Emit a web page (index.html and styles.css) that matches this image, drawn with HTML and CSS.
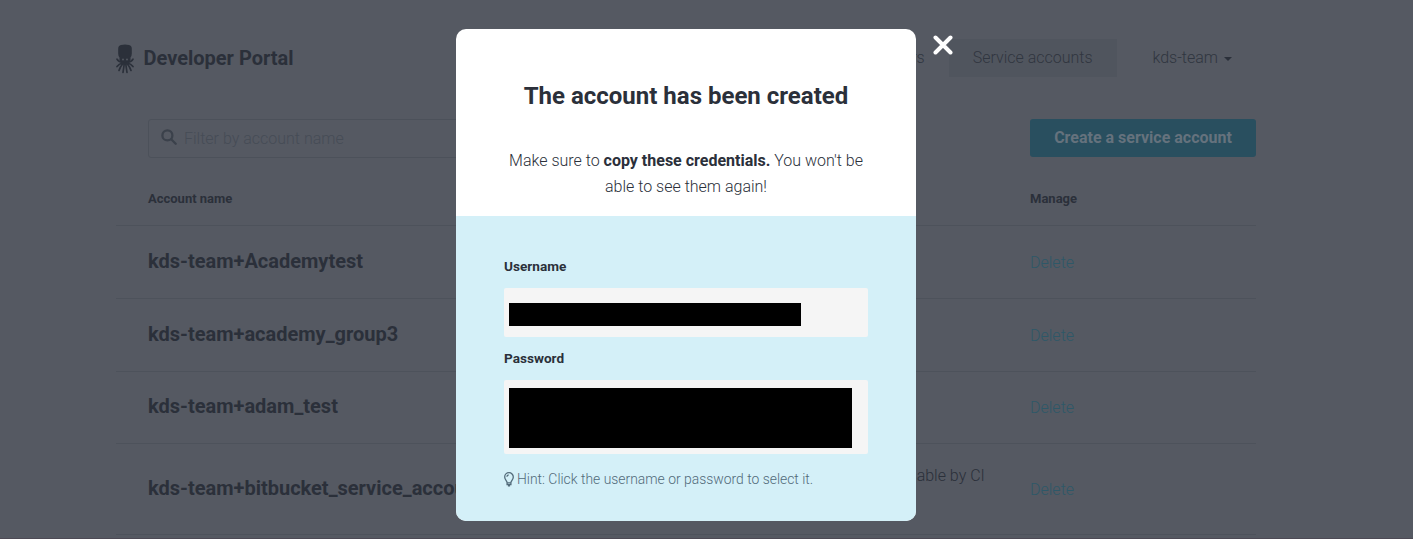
FILE: index.html
```
<!DOCTYPE html>
<html lang="en">
<head>
<meta charset="utf-8">
<title>Developer Portal</title>
<link rel="stylesheet" href="styles.css">
</head>
<body>
<div class="page">
  <header class="header">
    <div class="brand">
      <svg class="logo" viewBox="0 0 18 30">
        <path class="solid" d="M5 1Q9 0 13 1Q15.800 1.600 15.800 4.800V9.500Q15.800 12 14.500 13.500V16.500L12 19.500H6L3.500 16.500V13.500Q2.200 12 2.200 9.500V4.800Q2.200 1.600 5 1Z"/>
        <path class="arms" d="M1 15.200Q2.500 18 6.500 18.600M17 15.200Q15.500 18 11.500 18.600M6.500 19Q3 20 1 22.500M11.500 19Q15 20 17 22.500M7 19.500Q4 23 3 26.500M11 19.500Q14 23 15 26.500M8.300 19.500L7 28.500M9.700 19.500L11 28.500"/>
        <circle class="eye" cx="7" cy="15.500" r=".9"/><circle class="eye" cx="11" cy="15.500" r=".9"/>
      </svg>
      <span class="brand-name">Developer Portal</span>
    </div>
    <nav class="nav">
      <span class="nav-item">Users</span>
      <span class="nav-item active">Service accounts</span>
      <span class="nav-item team">kds-team <i class="caret"></i></span>
    </nav>
  </header>
  <div class="toolbar">
    <div class="search">
      <svg class="search-icon" viewBox="0 0 16 16"><circle cx="6.400" cy="6.400" r="5"/><path d="M10.200 10.200L14.700 14.700"/></svg>
      <span>Filter by account name</span>
    </div>
    <div class="button">Create a service account</div>
  </div>
  <div class="row head"><span>Account name</span><span></span><span>Manage</span></div>
  <div class="row"><span class="name">kds-team+Academytest</span><span></span><span class="delete">Delete</span></div>
  <div class="row"><span class="name">kds-team+academy_group3</span><span></span><span class="delete">Delete</span></div>
  <div class="row short"><span class="name">kds-team+adam_test</span><span></span><span class="delete">Delete</span></div>
  <div class="row tall"><span class="name">kds-team+bitbucket_service_account</span><span class="note">Usable by CI</span><span class="delete">Delete</span></div>
</div>
<section class="modal">
  <div class="modal-head">
    <h1>The account has been created</h1>
    <p>Make sure to <b>copy these credentials.</b> You won't be<br>able to see them again!</p>
  </div>
  <div class="modal-body">
    <div class="label">Username</div>
    <div class="field username"><div class="redacted"></div></div>
    <div class="label">Password</div>
    <div class="field password"><div class="redacted"></div></div>
    <div class="hint">
      <svg class="bulb" viewBox="0 0 10 15"><path d="M3.100 10.800C3.100 8.700.7 7.800.7 5A4.300 4.300 0 0 1 9.300 5C9.300 7.800 6.900 8.700 6.900 10.800ZM3.100 10.800V12.600H6.900V10.800M3.900 13.900H6.100M2.900 4.800Q3 3.100 4.700 2.900"/></svg>
      <span>Hint: Click the username or password to select it.</span>
    </div>
  </div>
</section>
<svg class="close" viewBox="0 0 20 20"><path d="M2.500 2.500L17.500 17.500M17.500 2.500L2.500 17.500"/></svg>
</body>
</html>
```

FILE: styles.css
```
* { box-sizing: border-box; }
body {
  margin: 0;
  height: 539px;
  overflow: hidden;
  background: #555962;
  border-bottom: 1px solid #4d4a55;
  color: #2b303a;
  font: 300 16px/26px Roboto, sans-serif;
}
.page { width: 1140px; margin-left: 116px; }
.header { height: 119px; padding-top: 39px; display: flex; justify-content: space-between; align-items: flex-start; }
.brand { display: flex; align-items: center; height: 39px; gap: 9.5px; }
.logo { width: 18px; height: 30px; }
.solid { fill: #2b303a; }
.arms { fill: none; stroke: #2b303a; stroke-width: 1.7; stroke-linecap: round; }
.eye { fill: #555962; }
.brand-name { font-size: 20px; font-weight: 700; padding-bottom: 2px; }
.nav { display: flex; }
.nav-item { height: 38px; line-height: 38px; padding: 0 24px; color: #303640; }
.nav-item.active { background: #50555e; }
.nav-item.team { padding: 0 24px 0 36px; display: flex; align-items: center; gap: 6px; }
.caret { border: 4px solid transparent; border-top-color: #2b303a; border-bottom: 0; margin-top: 2px; }
.toolbar { display: flex; justify-content: space-between; padding-left: 32px; }
.search { width: 640px; height: 39px; border: 1px solid #4c515a; border-radius: 3px; display: flex; align-items: center; gap: 7px; padding-left: 12px; color: #464c56; }
.search-icon { width: 16px; height: 16px; fill: none; stroke: #3b414b; stroke-width: 2.300; stroke-linecap: round; margin-top: -3px; }
.button { width: 226px; height: 38px; border-radius: 3px; background: #294f5f; color: #65727d; font-weight: 700; line-height: 38px; text-align: center; }
.row { display: grid; grid-template-columns: 750px 132px 1fr; align-items: center; height: 73px; padding-left: 32px; border-bottom: 1px solid #4d525b; }
.row.head { height: 68px; padding-top: 15px; font-size: 13px; font-weight: 700; }
.row.short { height: 72px; }
.row.short .delete { padding-top: 1px; }
.row.tall { height: 91px; }
.name { font-size: 20px; font-weight: 700; padding-bottom: 2px; }
.row.short .name { padding-bottom: 3px; }
.note { margin-top: -26px; }
.delete { color: #2d5868; padding-top: 2px; }
.modal { position: absolute; left: 456px; top: 29px; width: 460px; height: 492px; border-radius: 10px; overflow: hidden; background: #fff; color: #2b303a; }
.modal-head { height: 187px; padding-top: 51px; text-align: center; }
h1 { margin: 0 0 35px; font-size: 24px; line-height: 33px; font-weight: 700; }
p { margin: 0; }
b { font-weight: 700; }
.modal-body { height: 305px; background: #d4f0f8; padding: 40px 48px; }
.label { font-size: 13.6px; line-height: 20px; padding-bottom: 2px; font-weight: 700; }
.field { background: #f5f5f5; border-radius: 2px; }
.redacted { background: #000; }
.username { height: 49px; margin: 10px 0 11px; padding: 15px 5px; }
.username .redacted { width: 292px; height: 23px; }
.password { height: 74px; margin: 10px 0 12px; padding: 8px 5px; }
.password .redacted { width: 343px; height: 60px; }
.hint { display: flex; align-items: center; gap: 3px; height: 26px; font-size: 13.9px; color: #526b7a; }
.bulb { width: 10px; height: 15px; fill: none; stroke: #526b7a; stroke-width: 1.300; }
.close { position: absolute; left: 933px; top: 35px; width: 20px; height: 20px; fill: none; stroke: #fff; stroke-width: 4; stroke-linecap: round; }
```
